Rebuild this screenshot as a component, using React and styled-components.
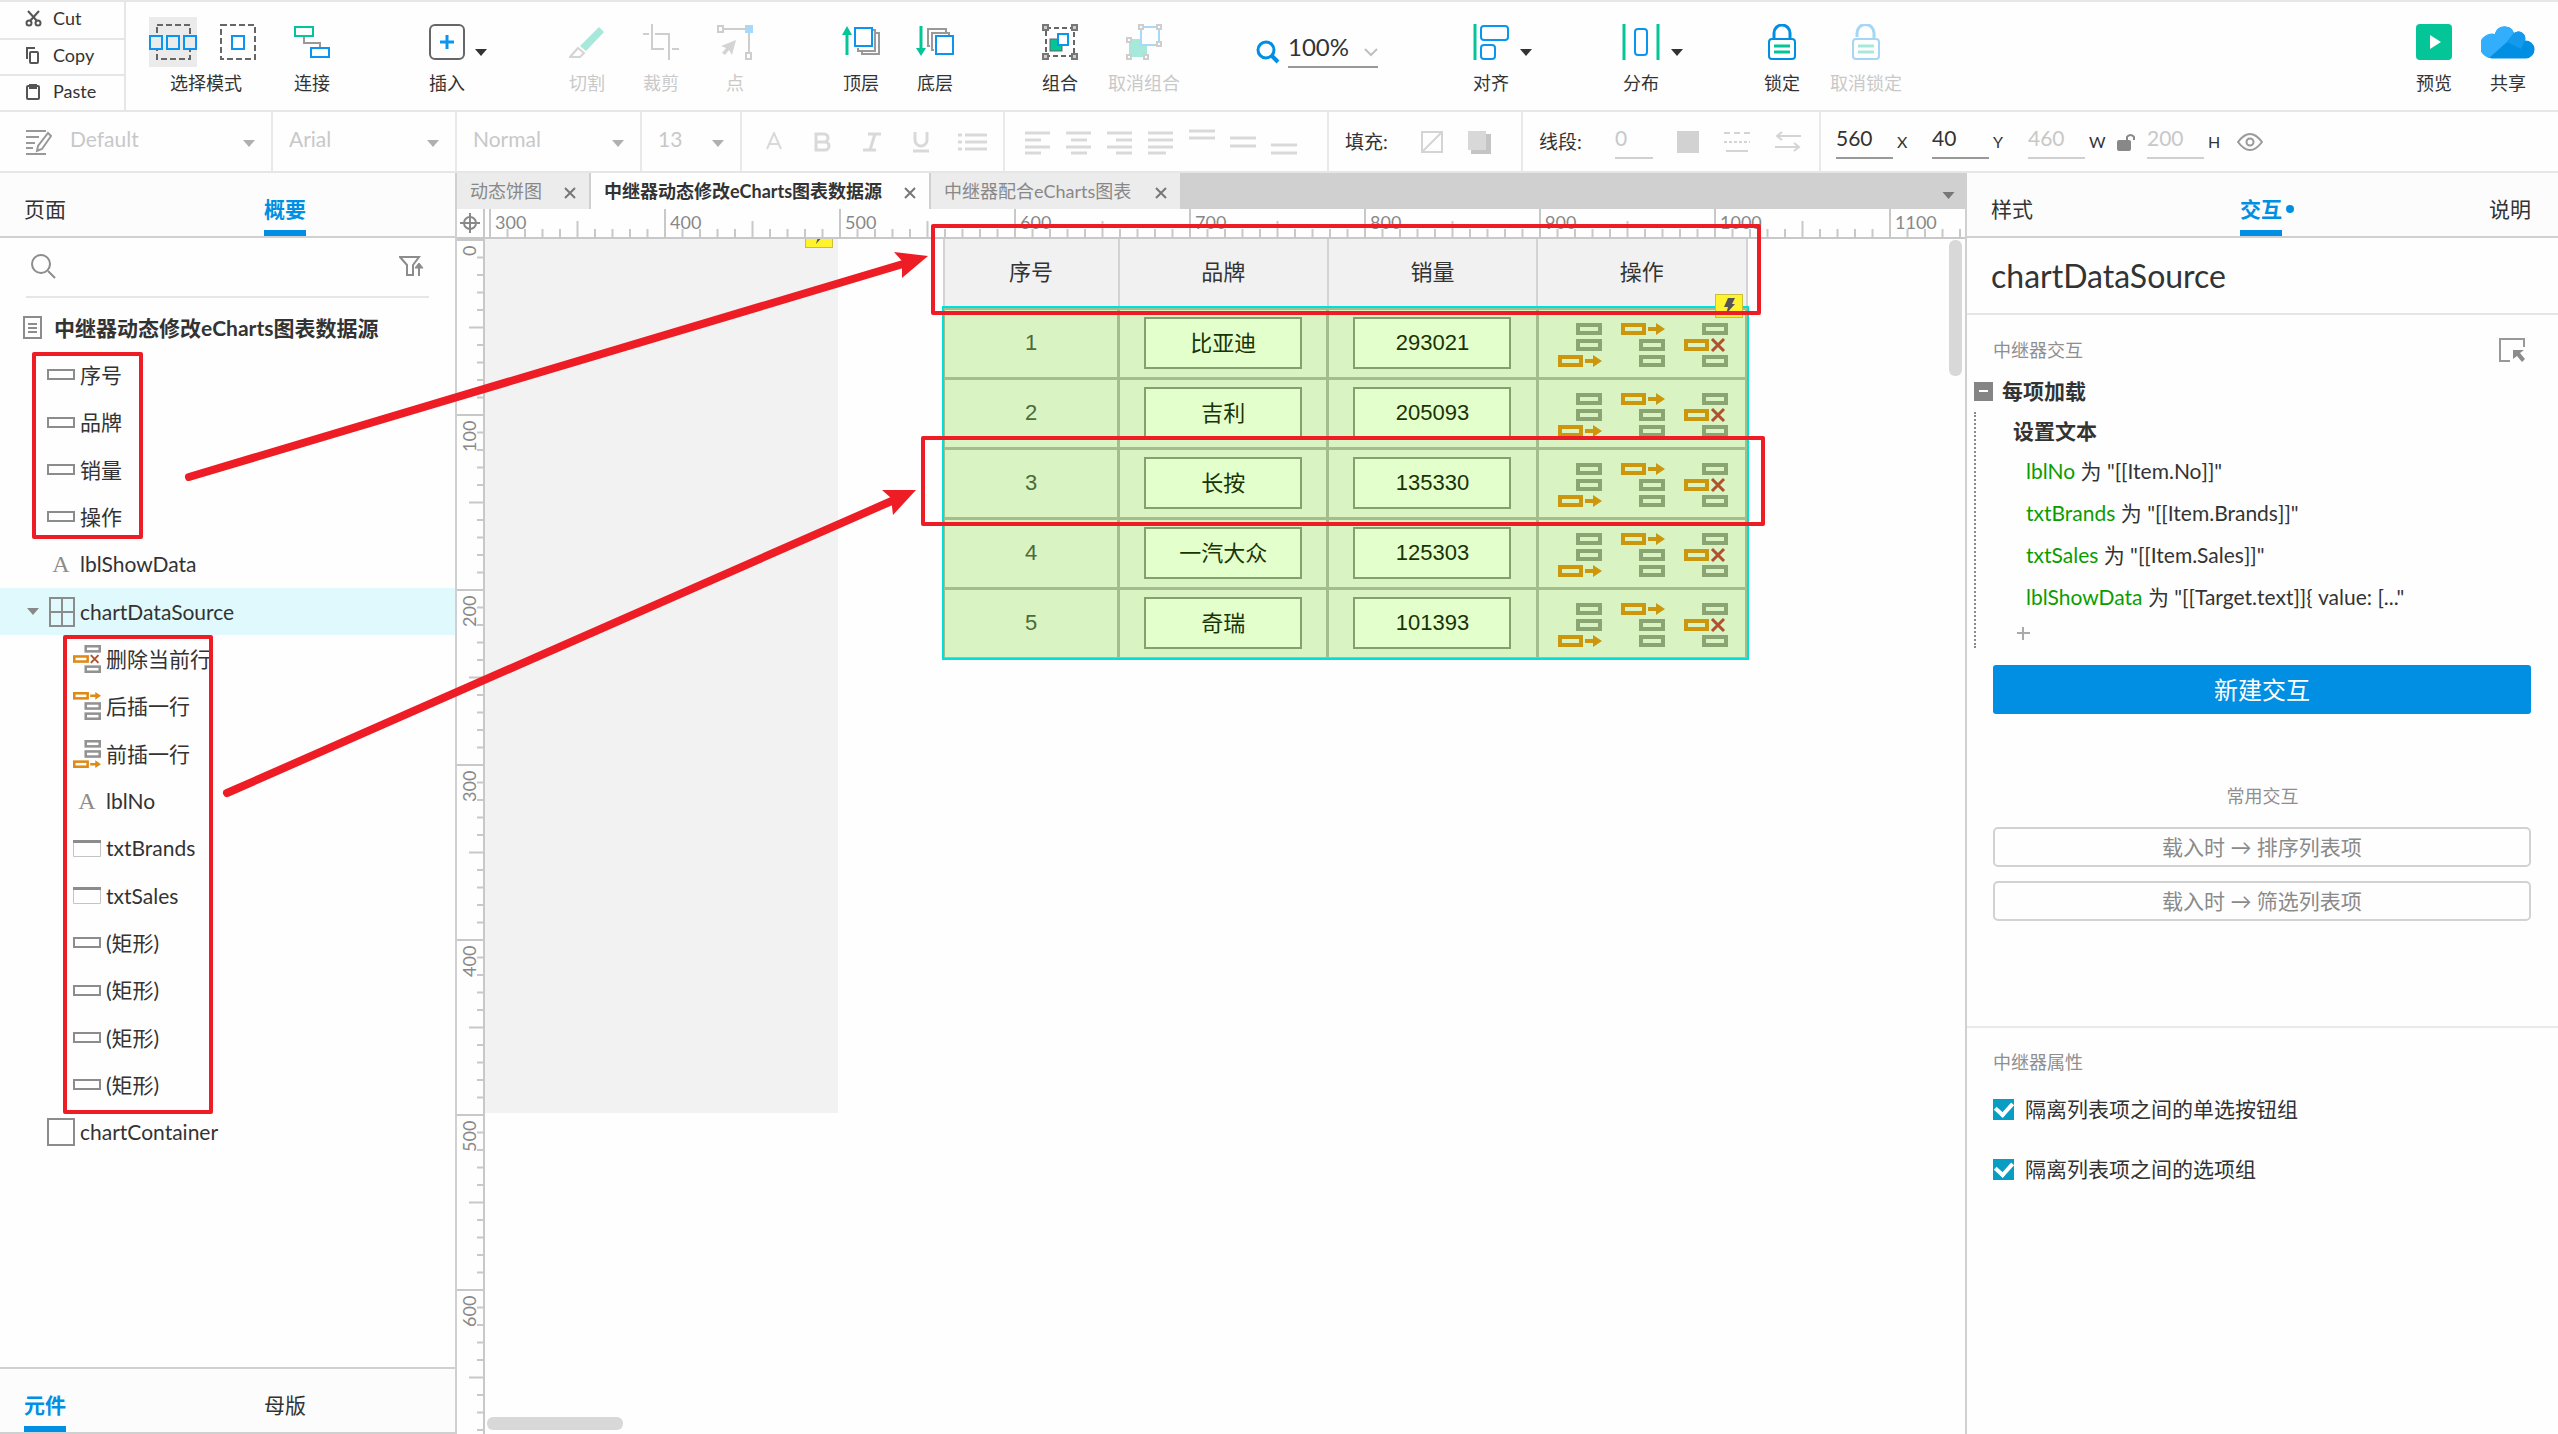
import React from 'react'
import styled, { createGlobalStyle, css } from 'styled-components'

const GlobalStyle = createGlobalStyle`
  * {
    box-sizing: border-box;
  }
  body {
    margin: 0;
    background: #fefefe;
    color: #333;
    font-family: Lato, "Noto Sans CJK SC", sans-serif;
    font-size: 21px;
    line-height: 24px;
  }
  button, input, select {
    font: inherit;
    color: inherit;
    margin: 0;
    padding: 0;
    border: 0;
    border-radius: 0;
    background: none;
    appearance: none;
  }
  button {
    cursor: pointer;
  }
  svg {
    display: block;
    flex: none;
  }
`

const BLUE = '#018fe3'
const SKY = '#0a96f0'
const GREEN = '#04c598'
const RED = '#ee1c25'

const Page = styled.div`
  position: relative;
  display: flex;
  flex-direction: column;
  min-height: 100vh;
  overflow: hidden;
`

/* ---------- top toolbar ---------- */

const Toolbar = styled.header`
  display: flex;
  height: 112px;
  border-top: 2px solid #e6e6e6;
  border-bottom: 2px solid #e6e6e6;
`
const Clipboard = styled.div`
  display: grid;
  grid-template-rows: repeat(3, 1fr);
  width: 126px;
  border-right: 2px solid #e6e6e6;
`
const ClipButton = styled.button`
  display: flex;
  align-items: center;
  gap: 11px;
  padding: 0 0 4px 25px;
  font-size: 18px;
  & + & {
    border-top: 2px solid #e6e6e6;
  }
`
const ToolGroup = styled.div`
  display: flex;
  align-items: flex-start;
  padding-top: 15px;
  margin-left: ${p => (p.$end ? 'auto' : `${p.$gap}px`)};
  margin-right: ${p => (p.$end ? 13 : 0)}px;
`
const ToolButton = styled.button`
  display: flex;
  flex-direction: column;
  align-items: center;
  gap: 4px;
  width: ${p => p.$width}px;
  font-size: 18px;
  white-space: nowrap;
  color: #333;
  &:disabled {
    color: #c9c9c9;
  }
  &:disabled svg {
    opacity: 0.35;
  }
`
const IconBox = styled.span`
  display: flex;
  align-items: center;
  height: 50px;
  background: ${p => (p.$active ? '#ebebeb' : 'none')};
`
const ModeIcons = styled.span`
  display: flex;
  gap: 23px;
  align-self: flex-start;
`
const CaretButton = styled.button`
  display: flex;
  align-items: center;
  height: 70px;
`
const ZoomLevel = styled.label`
  display: flex;
  align-items: flex-end;
  gap: 8px;
  padding-top: 11px;
  > svg {
    margin-bottom: 4px;
  }
`
const ZoomSelect = styled.span`
  display: flex;
  align-items: center;
  border-bottom: 2px solid #999;
  select {
    width: 76px;
    height: 38px;
    font-size: 24px;
  }
  svg {
    margin-top: 10px;
  }
`

/* ---------- style bar ---------- */

const StyleBar = styled.div`
  display: flex;
  height: 61px;
  border-bottom: 2px solid #e6e6e6;
`
const Section = styled.div`
  display: flex;
  align-items: center;
  justify-content: ${p => (p.$spread ? 'space-between' : 'flex-start')};
  gap: ${p => p.$gap || 0}px;
  width: ${p => p.$width}px;
  padding: 0 16px 0 ${p => p.$pad || 16}px;
  border-right: 2px solid #e9e9e9;
  color: #c8c8c8;
  select {
    flex: 1;
    min-width: 0;
    height: 44px;
    padding-bottom: 6px;
    opacity: 1;
  }
  select + svg {
    margin-top: 4px;
  }
`
const SectionField = styled.label`
  display: flex;
  align-items: center;
`
const SectionLabel = styled.span`
  width: 76px;
  font-size: 19px;
  color: #333;
`
const MiniButton = styled.button`
  display: flex;
  justify-content: center;
  width: ${p => p.$width || 26}px;
  color: #d9d9d9;
`
const ValueInput = styled.input`
  width: ${p => p.$width || 57}px;
  height: 34px;
  padding-bottom: 6px;
  border-bottom: 2px solid #999;
  &:disabled {
    color: #c8c8c8;
    border-color: #d0d0d0;
  }
`
const Coordinates = styled.div`
  display: grid;
  grid-template-columns: 96px 96px 89px 30px 90px 26px;
  align-items: center;
  padding-left: 15px;
`
const CoordField = styled.label`
  display: flex;
  align-items: center;
  gap: 4px;
  font-size: 16px;
  input {
    font-size: 21px;
  }
`

/* ---------- panels ---------- */

const Workspace = styled.main`
  display: flex;
  flex: 1;
`
const SidePanel = styled.aside`
  display: flex;
  flex-direction: column;
  flex: none;
  width: ${p => p.$width}px;
  border: 0 solid #d0d0d0;
  border-${p => p.$edge}-width: 2px;
`
const PanelTabs = styled.nav`
  display: flex;
  justify-content: ${p => (p.$spread ? 'space-between' : 'flex-start')};
  gap: 198px;
  height: 65px;
  padding: 0 ${p => (p.$spread ? '27px 0 24px' : '24px')};
  background: #fcfcfc;
  border-bottom: 2px solid #d0d0d0;
  ${p => p.$bottom && css`
    height: 67px;
    margin-top: auto;
    border-top: 2px solid #d0d0d0;
  `}
`
const PanelTab = styled.button`
  position: relative;
  padding-top: 14px;
  border-bottom: 6px solid transparent;
  ${p => p.$active && css`
    color: ${BLUE};
    font-weight: bold;
    border-color: ${BLUE};
  `}
  ${p => p.$dot && css`
    &::after {
      content: "";
      position: absolute;
      right: -12px;
      top: 32px;
      width: 8px;
      height: 8px;
      border-radius: 50%;
      background: ${BLUE};
    }
  `}
`
const SearchBar = styled.label`
  display: flex;
  align-items: center;
  gap: 12px;
  height: 60px;
  margin: 0 26px 6px;
  padding: 0 5px 2px;
  border-bottom: 2px solid #e6e6e6;
  input {
    flex: 1;
    min-width: 0;
  }
`
const Tree = styled.ul`
  display: grid;
  grid-auto-rows: 1fr;
  height: 852px;
  margin: 0;
  padding: 0;
  list-style: none;
`
const TreeRow = styled.li`
  display: flex;
  align-items: center;
  gap: ${p => (p.$level ? 5 : 12)}px;
  white-space: nowrap;
  background: ${p => (p.$selected ? '#e0f9fc' : 'none')};
  font-weight: ${p => (p.$level ? 'normal' : 'bold')};
`
const Twisty = styled.span`
  display: flex;
  justify-content: center;
  width: ${p => [23, 47, 73][p.$level]}px;
  margin-right: -${p => (p.$level ? 5 : 12)}px;
  padding-left: 18px;
`
const LetterIcon = styled.span`
  width: 28px;
  text-align: center;
  font-family: "Liberation Serif", serif;
  font-size: 24px;
  color: #8c8c8c;
`

/* ---------- canvas ---------- */

const Editor = styled.section`
  display: flex;
  flex-direction: column;
  flex: 1;
  min-width: 0;
`
const DocTabs = styled.div`
  display: flex;
  height: 36px;
  background: #d0d0d0;
  font-size: 18px;
`
const DocTab = styled.div`
  display: flex;
  align-items: center;
  justify-content: space-between;
  width: ${p => p.$width}px;
  padding: 0 13px;
  border-right: 2px solid #d0d0d0;
  color: ${p => (p.$active ? '#333' : '#888')};
  background: ${p => (p.$active ? '#fefefe' : '#ececec')};
  font-weight: ${p => (p.$active ? 'bold' : 'normal')};
  white-space: nowrap;
  svg {
    margin-top: 4px;
  }
`
const TabMenu = styled.button`
  margin-left: auto;
  padding: 8px 9px 0;
`
const CanvasGrid = styled.div`
  display: grid;
  grid-template-columns: 28px 1fr;
  grid-template-rows: 30px 1fr;
  flex: 1;
`
const RulerCorner = styled.div`
  display: grid;
  place-items: center;
  border-right: 2px solid #c8c8c8;
  border-bottom: 2px solid #c8c8c8;
`
const RulerTop = styled.div`
  display: flex;
  overflow: hidden;
  padding-left: 4px;
  border-bottom: 2px solid #c8c8c8;
`
const RulerLeft = styled.div`
  overflow: hidden;
  height: 0;
  min-height: 100%;
  border-right: 2px solid #c8c8c8;
`
const RulerMark = styled.div`
  position: relative;
  flex: none;
  width: ${p => (p.$vertical ? 26 : 175)}px;
  height: ${p => (p.$vertical ? 175 : 28)}px;
  color: #888;
  font-size: 18px;
  svg {
    position: absolute;
    inset: 0;
  }
  span {
    display: block;
    padding: 1px 0 0 6px;
    ${p => p.$vertical && css`
      writing-mode: vertical-rl;
      transform: rotate(180deg);
      height: 175px;
      padding: 0 0 7px 2px;
      text-align: end;
    `}
  }
`
const Canvas = styled.div`
  position: relative;
  overflow: hidden;
`
const ChartArea = styled.div`
  position: absolute;
  left: 0;
  top: 0;
  width: 353px;
  height: 874px;
  background: #f2f2f2;
`
const Bolt = styled.span`
  position: absolute;
  left: ${p => p.$x}px;
  top: ${p => p.$y}px;
  display: grid;
  place-items: center;
  width: 28px;
  height: 24px;
  background: #fff32d;
  border: 1px solid #c9bf3a;
`
const Scrollbar = styled.div`
  position: absolute;
  border-radius: 6px;
  background: #d8d8d8;
  ${p => (p.$vertical
    ? 'right: 3px; top: 1px; width: 13px; height: 136px;'
    : 'left: 2px; bottom: 4px; width: 136px; height: 13px;')}
`
const Repeater = styled.table`
  position: absolute;
  left: 457px;
  top: -2px;
  width: 806px;
  table-layout: fixed;
  border-collapse: collapse;
  font-family: "Liberation Sans", "Noto Sans CJK SC", sans-serif;
  font-size: 22px;
  text-align: center;
  col:first-child {
    width: 175px;
  }
  th {
    height: 70px;
    padding: 0;
    font-weight: normal;
    background: #f1f1f1;
    border: 2px solid #d3d3d3;
  }
  tbody {
    outline: 2px solid #00dfdc;
  }
  td {
    height: 70px;
    padding: 0;
    color: #4c6b38;
    background: #d9f3c2;
    border: 3px solid #a3bd8c;
  }
`
const CellInput = styled.input`
  display: block;
  width: 158px;
  height: 52px;
  margin: 0 auto;
  padding-bottom: ${p => (p.$cjk ? 4 : 0)}px;
  text-align: center;
  color: #1a3305;
  background: #e3ffcc;
  border: 2px solid #84a06d;
`
const RowActions = styled.div`
  display: flex;
  justify-content: center;
  gap: 19px;
  padding: 3px 0 0 3px;
`

/* ---------- interactions ---------- */

const WidgetName = styled.h2`
  height: 77px;
  margin: 0;
  padding: 0 24px;
  border-bottom: 2px solid #e6e6e6;
  font-size: 32px;
  font-weight: normal;
  line-height: 75px;
`
const GroupTitle = styled.div`
  display: flex;
  align-items: center;
  justify-content: ${p => (p.$center ? 'center' : 'space-between')};
  margin: ${p => p.$top}px ${p => (p.$center ? 26 : 33)}px 5px 26px;
  color: #8f8f8f;
  font-size: 18px;
`
const EventHead = styled.div`
  display: flex;
  align-items: center;
  gap: 9px;
  height: 42px;
  margin-top: 3px;
  padding-left: 7px;
  font-weight: bold;
`
const Collapse = styled.button`
  display: grid;
  place-items: center;
  width: 19px;
  height: 19px;
  background: #858585;
`
const EventBody = styled.div`
  display: flex;
  flex-direction: column;
  margin-left: 7px;
  padding-left: 37px;
  border-left: 2px dotted #8a8a8a;
`
const ActionName = styled.strong`
  line-height: 38px;
`
const ActionLine = styled.div`
  padding-left: 13px;
  line-height: 42px;
  white-space: nowrap;
  b {
    font-weight: normal;
    color: #0a9d00;
  }
`
const AddTarget = styled.button`
  height: 30px;
  padding-left: 4px;
`
const PrimaryButton = styled.button`
  height: 49px;
  margin: 17px 27px 0 26px;
  border-radius: 3px;
  color: #fff;
  background: ${BLUE};
  font-size: 24px;
`
const OutlineButton = styled.button`
  height: 40px;
  margin: 14px 27px 0 26px;
  border: 2px solid #d2d2d2;
  border-radius: 5px;
  color: #8a8a8a;
`
const Divider = styled.hr`
  width: 100%;
  margin: 105px 0 0;
  border: 0;
  border-top: 2px solid #e9e9e9;
`
const CheckRow = styled.label`
  display: flex;
  align-items: center;
  gap: 11px;
  height: 60px;
  padding-left: 26px;
  input {
    display: grid;
    place-items: center;
    width: 21px;
    height: 21px;
    background: #0a9dc4;
  }
  input:checked::after {
    content: "";
    width: 8px;
    height: 13px;
    margin-bottom: 4px;
    border: solid #fff;
    border-width: 0 4px 4px 0;
    transform: rotate(42deg);
  }
`
const Annotations = styled.svg`
  position: absolute;
  left: 0;
  top: 0;
  pointer-events: none;
`

/* ---------- icons ---------- */

const Svg = ({ w, h, vb, children, ...rest }) => (
  <svg width={w} height={h} viewBox={vb || `0 0 ${w} ${h}`} fill="none" aria-hidden="true" {...rest}>
    {children}
  </svg>
)

const Caret = ({ color = '#333', w = 12 }) => (
  <Svg w={w} h={7} vb="0 0 12 7"><path d="M0 0h12L6 7z" fill={color} /></Svg>
)

const SelectIntersectIcon = () => (
  <Svg w={48} h={36}>
    <rect x="8" y="1" width="33" height="34" stroke="#666" strokeWidth="2" strokeDasharray="6 3" />
    <g stroke={SKY} strokeWidth="2" fill="#ebebeb">
      <rect x="1" y="12" width="12" height="13" />
      <rect x="18" y="12" width="12" height="13" />
      <rect x="35" y="12" width="12" height="13" />
    </g>
  </Svg>
)
const SelectContainIcon = () => (
  <Svg w={36} h={36}>
    <rect x="1" y="1" width="34" height="34" stroke="#666" strokeWidth="2" strokeDasharray="6 3" />
    <rect x="12" y="12" width="12" height="13" stroke={SKY} strokeWidth="2" />
  </Svg>
)
const ConnectIcon = () => (
  <Svg w={36} h={36}>
    <path d="M10 12v7h16v5" stroke="#999" strokeWidth="2" />
    <rect x="1" y="3" width="18" height="9" stroke={GREEN} strokeWidth="2" />
    <rect x="17" y="24" width="18" height="9" stroke={SKY} strokeWidth="2" />
  </Svg>
)
const InsertIcon = () => (
  <Svg w={36} h={36}>
    <rect x="1" y="1" width="34" height="34" rx="5" stroke="#666" strokeWidth="2" />
    <path d="M18 11v14M11 18h14" stroke={SKY} strokeWidth="3" />
  </Svg>
)
const KnifeIcon = () => (
  <Svg w={36} h={36}>
    <path d="M30 3l5 5L17 27l-6-5z" fill={GREEN} />
    <path d="M9 24l6 5-4 4H1z" stroke="#888" strokeWidth="2" />
  </Svg>
)
const CropIcon = () => (
  <Svg w={36} h={36}>
    <path d="M0 10h6M9 0v25h12M12 10h14v26M29 25h7" stroke="#777" strokeWidth="2" />
  </Svg>
)
const PointIcon = () => (
  <Svg w={36} h={36}>
    <path d="M6 5h22M32 9v19" stroke="#777" strokeWidth="2" />
    <rect x="1" y="2" width="5" height="6" stroke="#777" strokeWidth="2" />
    <rect x="29" y="29" width="5" height="6" stroke="#777" strokeWidth="2" />
    <rect x="28" y="1" width="8" height="8" fill={SKY} />
    <path d="M19 16L4 22l5 2-4 5 3 2 4-5 3 5z" fill="#888" />
  </Svg>
)
const FrontIcon = () => (
  <Svg w={38} h={36}>
    <path d="M5 31V8" stroke={GREEN} strokeWidth="3" />
    <path d="M5 2l5 9H0z" fill={GREEN} />
    <path d="M20 27v3h17V9h-3M16 24v3h17V6h-3" stroke="#999" strokeWidth="2" />
    <rect x="13" y="4" width="17" height="18" fill="#fff" stroke={SKY} strokeWidth="2" />
  </Svg>
)
const BackIcon = () => (
  <Svg w={38} h={36}>
    <path d="M5 2v23" stroke={GREEN} strokeWidth="3" />
    <path d="M5 32l5-8H0z" fill={GREEN} />
    <path d="M14 22h-2V5h18v3M18 26h-2V9h17v3" stroke="#999" strokeWidth="2" />
    <rect x="20" y="12" width="17" height="18" fill="#fff" stroke={SKY} strokeWidth="2" />
  </Svg>
)
const GroupIcon = () => (
  <Svg w={36} h={36}>
    <rect x="4" y="4" width="28" height="28" stroke="#666" strokeWidth="2" strokeDasharray="5 3" />
    <g fill="#ccc" stroke="#777" strokeWidth="2">
      <rect x="1" y="1" width="5" height="5" /><rect x="30" y="1" width="5" height="5" />
      <rect x="1" y="30" width="5" height="5" /><rect x="30" y="30" width="5" height="5" />
    </g>
    <rect x="8" y="15" width="12" height="12" fill={GREEN} stroke="#666" />
    <rect x="16" y="10" width="10" height="11" fill="#fff" stroke={SKY} strokeWidth="2" />
  </Svg>
)
const UngroupIcon = () => (
  <Svg w={36} h={36}>
    <rect x="3" y="15" width="18" height="18" fill={GREEN} />
    <rect x="15" y="3" width="18" height="18" fill="#fff" stroke={SKY} strokeWidth="2" />
    <g fill="#fff" stroke="#777" strokeWidth="2">
      <rect x="13" y="1" width="4" height="4" /><rect x="31" y="1" width="4" height="4" />
      <rect x="31" y="18" width="4" height="4" /><rect x="1" y="14" width="4" height="4" />
      <rect x="1" y="31" width="4" height="4" /><rect x="18" y="31" width="4" height="4" />
    </g>
  </Svg>
)
const AlignIcon = () => (
  <Svg w={36} h={36}>
    <path d="M2 0v36" stroke={GREEN} strokeWidth="3" />
    <rect x="8" y="2" width="27" height="14" rx="3" stroke={SKY} strokeWidth="2" />
    <rect x="8" y="21" width="14" height="14" rx="3" stroke={SKY} strokeWidth="2" />
  </Svg>
)
const DistributeIcon = () => (
  <Svg w={38} h={36}>
    <path d="M2 0v36M36 0v36" stroke={GREEN} strokeWidth="3" />
    <rect x="13" y="5" width="12" height="26" rx="3" stroke={SKY} strokeWidth="2" />
  </Svg>
)
const LockIcon = ({ open }) => (
  <Svg w={28} h={36}>
    <path d={open ? 'M5 13V9a8 8 0 0 1 17 0v6' : 'M6 15V9a8 8 0 0 1 16 0v6'} stroke={BLUE} strokeWidth="3" />
    <rect x="1" y="15" width="26" height="20" rx="3" fill="#fff" stroke={BLUE} strokeWidth="2" />
    <path d="M6 22h16M6 28h16" stroke={GREEN} strokeWidth="3" />
  </Svg>
)
const PreviewIcon = () => (
  <Svg w={36} h={36}>
    <rect width="36" height="36" rx="4" fill={GREEN} />
    <path d="M14 11v14l11-7z" fill="#fff" />
  </Svg>
)
const CloudIcon = () => (
  <Svg w={54} h={36}>
    <path d="M11 34.500a12 12 0 0 1 3-24.500a10 10 0 0 1 19-1a7 7 0 0 1 11 7.500a9 9 0 0 1 1 18z" fill={BLUE} />
    <path d="M8 34a12 12 0 0 1 6-24a10 10 0 0 1 19-1l-7 9z" fill="#33aefc" />
    <path d="M33 9a7 7 0 0 1 11 7.500L40 25l-14-7z" fill="#1499ec" />
  </Svg>
)
const ScissorsIcon = () => (
  <Svg w={17} h={17} stroke="#555" strokeWidth="2">
    <circle cx="4" cy="13" r="2.500" /><circle cx="13" cy="13" r="2.500" />
    <path d="M3 1l9 10M14 1L5 11" />
  </Svg>
)
const CopyIcon = () => (
  <Svg w={17} h={17} stroke="#555" strokeWidth="2">
    <path d="M2 12V1h8" /><rect x="5" y="5" width="8" height="11" rx="1" />
  </Svg>
)
const PasteIcon = () => (
  <Svg w={17} h={17} stroke="#555" strokeWidth="2">
    <rect x="2" y="3" width="12" height="13" rx="1" />
    <path d="M5 2h6v3H5z" fill="#555" />
  </Svg>
)
const EditStyleIcon = () => (
  <Svg w={26} h={26} stroke="#999" strokeWidth="2">
    <path d="M0 2h20M0 8h13M0 14h9M0 19h7M0 25h20M22 4l3 3-9 13-5 2 1-5z" />
  </Svg>
)
const ListIcon = () => (
  <Svg w={30} h={20} stroke="currentColor" strokeWidth="3">
    <path d="M1 3h4M8 3h22M1 10h4M8 10h22M1 17h4M8 17h22" />
  </Svg>
)
const LinesIcon = ({ d }) => (
  <Svg w={26} h={26} stroke="currentColor" strokeWidth="3"><path d={d} /></Svg>
)
const NoFillIcon = () => (
  <Svg w={22} h={22} stroke="#d4d4d4" strokeWidth="2"><rect x="1" y="1" width="20" height="20" /><path d="M2 20L20 2" /></Svg>
)
const ShadowIcon = () => (
  <Svg w={24} h={24}><path d="M4 4h20v20H4z" fill="#c4c4c4" /><path d="M1 1h18v19H1z" fill="#d8d8d8" /></Svg>
)
const SwatchIcon = () => <Svg w={22} h={22}><path d="M0 0h22v22H0z" fill="#d2d2d2" /></Svg>
const DashIcon = () => (
  <Svg w={28} h={22} stroke="#d4d4d4" strokeWidth="2">
    <path d="M1 2h26" strokeDasharray="6 4" /><path d="M1 11h26" strokeDasharray="3 2" /><path d="M3 20h22" />
  </Svg>
)
const SwapIcon = () => (
  <Svg w={26} h={22} stroke="#d4d4d4" strokeWidth="2"><path d="M26 5H2M7 1L2 5l5 4M0 16h24M19 12l5 4-5 4" /></Svg>
)
const PadlockIcon = () => (
  <Svg w={18} h={20}><path d="M10 9V5a4 4 0 0 1 7 0v3" stroke="#888" strokeWidth="2" /><rect y="8" width="14" height="11" rx="2" fill="#888" /></Svg>
)
const EyeIcon = () => (
  <Svg w={26} h={18} stroke="#999" strokeWidth="2"><path d="M1 9Q7 1 13 1t12 8q-6 8-12 8T1 9z" /><circle cx="13" cy="9" r="3.500" /></Svg>
)
const SearchIcon = () => (
  <Svg w={25} h={25} stroke="#8c8c8c" strokeWidth="2"><circle cx="10" cy="10" r="9" /><path d="M17 17l7 7" /></Svg>
)
const ZoomIcon = () => (
  <Svg w={24} h={24} stroke={BLUE} strokeWidth="3"><circle cx="10" cy="10" r="8" /><path d="M16 16l6 6" strokeWidth="4" /></Svg>
)
const FilterIcon = () => (
  <Svg w={25} h={21} stroke="#8c8c8c" strokeWidth="2">
    <path d="M1 1h19l-6 8v10H8V9z" /><path d="M20 20v-9" /><path d="M20 7l4 5h-8z" fill="#8c8c8c" strokeWidth="1" />
  </Svg>
)
const CloseIcon = () => (
  <Svg w={12} h={12} stroke="#777" strokeWidth="2"><path d="M1 1l10 10M11 1L1 11" /></Svg>
)
const PageIcon = () => (
  <Svg w={19} h={23} stroke="#8c8c8c" strokeWidth="2"><path d="M1 1h17v21H1zM5 8h9M5 12h9M5 16h9" /></Svg>
)
const RectIcon = () => (
  <Svg w={28} h={11} stroke="#8c8c8c" strokeWidth="2"><path d="M1 1h26v9H1z" /></Svg>
)
const FieldIcon = () => (
  <Svg w={28} h={17} stroke="#c4c4c4" strokeWidth="1"><path d="M.5 1h27v15.500H.5z" /><path d="M0 1.500h28" stroke="#8c8c8c" strokeWidth="3" /></Svg>
)
const GridIcon = () => (
  <Svg w={28} h={30} stroke="#8c8c8c" strokeWidth="2"><path d="M3 1h24v28H3zM15 1v28M3 15h24" /></Svg>
)
const BoxIcon = () => (
  <Svg w={28} h={28} stroke="#8c8c8c" strokeWidth="2"><path d="M1 1h26v26H1z" /></Svg>
)
const TargetIcon = () => (
  <Svg w={20} h={20} stroke="#888" strokeWidth="2"><circle cx="10" cy="10" r="6" /><path d="M10 0v20M0 10h20" /></Svg>
)
const PickIcon = () => (
  <Svg w={26} h={24} stroke="#999" strokeWidth="2">
    <path d="M25 9V1H1v22h10" /><path d="M14 12h11l-4 3 5 6-3 3-5-6-4 3z" fill="#8c8c8c" stroke="none" />
  </Svg>
)

// the three row operations share one drawing: the orange slot moves
const RowOpIcon = ({ op, size = 44, gray = '#8ba572', accent = '#cc970c' }) => {
  const slot = { after: 0, remove: 1, before: 2 }[op]
  const y = slot * 16
  return (
    <Svg w={size} h={size} vb="0 0 44 44">
      {[0, 1, 2].filter(i => i !== slot).map(i => (
        <rect key={i} x="20" y={i * 16 + 2} width="22" height="8" stroke={gray} strokeWidth="4" />
      ))}
      <rect x="2" y={y + 2} width="21" height="8" stroke={accent} strokeWidth="4" />
      {op === 'remove'
        ? <path d={`M28 ${y}l12 12M40 ${y}l-12 12`} stroke="#b0502c" strokeWidth="3" />
        : <path d={`M27 ${y + 4}h8v-4l9 6-9 6v-4h-8z`} fill={accent} />}
    </Svg>
  )
}

const BoltIcon = () => (
  <Svg w={12} h={16}><path d="M5 0h7L9 6h3L3 16l2-7H1z" fill="#555" /></Svg>
)

/* ---------- data ---------- */

const treeItems = [
  { level: 0, icon: <PageIcon />, name: '中继器动态修改eCharts图表数据源' },
  { level: 1, icon: <RectIcon />, name: '序号' },
  { level: 1, icon: <RectIcon />, name: '品牌' },
  { level: 1, icon: <RectIcon />, name: '销量' },
  { level: 1, icon: <RectIcon />, name: '操作' },
  { level: 1, icon: <LetterIcon>A</LetterIcon>, name: 'lblShowData' },
  { level: 1, icon: <GridIcon />, name: 'chartDataSource', open: true },
  { level: 2, icon: <RowOpIcon op="remove" size={28} gray="#929292" accent="#de8a14" />, name: '删除当前行' },
  { level: 2, icon: <RowOpIcon op="after" size={28} gray="#929292" accent="#de8a14" />, name: '后插一行' },
  { level: 2, icon: <RowOpIcon op="before" size={28} gray="#929292" accent="#de8a14" />, name: '前插一行' },
  { level: 2, icon: <LetterIcon>A</LetterIcon>, name: 'lblNo' },
  { level: 2, icon: <FieldIcon />, name: 'txtBrands' },
  { level: 2, icon: <FieldIcon />, name: 'txtSales' },
  { level: 2, icon: <RectIcon />, name: '(矩形)' },
  { level: 2, icon: <RectIcon />, name: '(矩形)' },
  { level: 2, icon: <RectIcon />, name: '(矩形)' },
  { level: 2, icon: <RectIcon />, name: '(矩形)' },
  { level: 1, icon: <BoxIcon />, name: 'chartContainer' },
]

const brands = [
  ['比亚迪', '293021'],
  ['吉利', '205093'],
  ['长按', '135330'],
  ['一汽大众', '125303'],
  ['奇瑞', '101393'],
]

const actions = [
  ['lblNo', '"[[Item.No]]"'],
  ['txtBrands', '"[[Item.Brands]]"'],
  ['txtSales', '"[[Item.Sales]]"'],
  ['lblShowData', '"[[Target.text]]{ value: [..."'],
]

const textAligns = [
  ['左对齐', 'M0 4h25M0 11h16M0 18h25M0 24h16'],
  ['居中', 'M0 4h25M5 11h16M0 18h25M5 24h16'],
  ['右对齐', 'M0 4h25M9 11h16M0 18h25M9 24h16'],
  ['两端对齐', 'M0 4h25M0 11h25M0 18h25M0 24h18'],
  ['顶部', 'M0 2h26M0 9h26'],
  ['中部', 'M0 9h26M0 17h26'],
  ['底部', 'M0 16h26M0 24h26'],
]

/* ---------- parts ---------- */

const Tool = ({ icon, label, width = 74, disabled }) => (
  <ToolButton $width={width} disabled={disabled}>
    <IconBox>{icon}</IconBox>
    {label}
  </ToolButton>
)

const Picker = ({ value, label }) => (
  <>
    <select aria-label={label} disabled defaultValue={value}>
      <option>{value}</option>
    </select>
    <Caret color="#b0b0b0" />
  </>
)

const Coord = ({ value, letter, disabled }) => (
  <CoordField>
    <ValueInput defaultValue={value} disabled={disabled} />
    {letter}
  </CoordField>
)

const Ruler = ({ from, count, vertical }) => {
  const ticks = [...Array(10).keys()].map(i => {
    const at = i * 17.5 + 1
    const start = i === 0 ? 0 : i === 5 ? 12 : 20
    return vertical ? `M${start} ${at}H28` : `M${at} ${start}V28`
  }).join('')
  return [...Array(count).keys()].map(i => (
    <RulerMark key={i} $vertical={vertical}>
      <Svg w={vertical ? 26 : 175} h={vertical ? 175 : 28} stroke="#c8c8c8" strokeWidth="2"><path d={ticks} /></Svg>
      <span>{from + i * 100}</span>
    </RulerMark>
  ))
}

const TopBar = () => (
  <Toolbar>
    <Clipboard>
      <ClipButton><ScissorsIcon />Cut</ClipButton>
      <ClipButton><CopyIcon />Copy</ClipButton>
      <ClipButton><PasteIcon />Paste</ClipButton>
    </Clipboard>
    <ToolGroup $gap={23}>
      <ToolButton $width={114}>
        <ModeIcons>
          <IconBox $active><SelectIntersectIcon /></IconBox>
          <IconBox><SelectContainIcon /></IconBox>
        </ModeIcons>
        选择模式
      </ToolButton>
    </ToolGroup>
    <ToolGroup $gap={12}><Tool icon={<ConnectIcon />} label="连接" /></ToolGroup>
    <ToolGroup $gap={70}>
      <Tool icon={<InsertIcon />} label="插入" width={56} />
      <CaretButton aria-label="插入选项"><Caret /></CaretButton>
    </ToolGroup>
    <ToolGroup $gap={63}>
      <Tool icon={<KnifeIcon />} label="切割" disabled />
      <Tool icon={<CropIcon />} label="裁剪" disabled />
      <Tool icon={<PointIcon />} label="点" disabled />
    </ToolGroup>
    <ToolGroup $gap={52}>
      <Tool icon={<FrontIcon />} label="顶层" />
      <Tool icon={<BackIcon />} label="底层" />
    </ToolGroup>
    <ToolGroup $gap={46}>
      <Tool icon={<GroupIcon />} label="组合" width={84} />
      <Tool icon={<UngroupIcon />} label="取消组合" width={84} disabled />
    </ToolGroup>
    <ToolGroup $gap={70}>
      <ZoomLevel>
        <ZoomIcon />
        <ZoomSelect>
          <select aria-label="缩放" defaultValue="100%"><option>100%</option></select>
          <Svg w={14} h={9} stroke="#c0c0c0" strokeWidth="2"><path d="M1 1l6 6 6-6" /></Svg>
        </ZoomSelect>
      </ZoomLevel>
    </ToolGroup>
    <ToolGroup $gap={84}>
      <Tool icon={<AlignIcon />} label="对齐" width={58} />
      <CaretButton aria-label="对齐选项"><Caret /></CaretButton>
    </ToolGroup>
    <ToolGroup $gap={79}>
      <Tool icon={<DistributeIcon />} label="分布" width={60} />
      <CaretButton aria-label="分布选项"><Caret /></CaretButton>
    </ToolGroup>
    <ToolGroup $gap={57}>
      <Tool icon={<LockIcon />} label="锁定" width={84} />
      <Tool icon={<LockIcon open />} label="取消锁定" width={84} disabled />
    </ToolGroup>
    <ToolGroup $end>
      <Tool icon={<PreviewIcon />} label="预览" />
      <Tool icon={<CloudIcon />} label="共享" />
    </ToolGroup>
  </Toolbar>
)

const FormatBar = () => (
  <StyleBar>
    <Section $width={273} $pad={26} $gap={18}><EditStyleIcon /><Picker label="样式" value="Default" /></Section>
    <Section $width={184}><Picker label="字体" value="Arial" /></Section>
    <Section $width={185}><Picker label="字重" value="Normal" /></Section>
    <Section $width={100}><Picker label="字号" value="13" /></Section>
    <Section $width={263} $pad={19} $spread>
      <MiniButton aria-label="颜色">
        <Svg w={18} h={20} stroke="currentColor" strokeWidth="2"><path d="M2 17L9 1l7 16M5 12h8" /></Svg>
      </MiniButton>
      <MiniButton aria-label="粗体">
        <Svg w={18} h={20} stroke="currentColor" strokeWidth="3"><path d="M2 2h8a4 4 0 0 1 0 8H2zM2 10h9a4 4 0 0 1 0 8H2z" /></Svg>
      </MiniButton>
      <MiniButton aria-label="斜体">
        <Svg w={18} h={20} stroke="currentColor" strokeWidth="3"><path d="M5 2h13M0 18h13M12 2L7 18" /></Svg>
      </MiniButton>
      <MiniButton aria-label="下划线">
        <Svg w={18} h={22} stroke="currentColor" strokeWidth="3"><path d="M3 1v8a6 6 0 0 0 12 0V1M1 20h16" /></Svg>
      </MiniButton>
      <MiniButton aria-label="项目符号" $width={30}><ListIcon /></MiniButton>
    </Section>
    <Section $width={324} $pad={20} $gap={15}>
      {textAligns.map(([label, d]) => (
        <MiniButton key={label} aria-label={label}><LinesIcon d={d} /></MiniButton>
      ))}
    </Section>
    <Section $width={194} $gap={10}>
      <SectionLabel>填充:</SectionLabel>
      <MiniButton aria-label="填充颜色"><NoFillIcon /></MiniButton>
      <MiniButton aria-label="阴影" $width={60}><ShadowIcon /></MiniButton>
    </Section>
    <Section $width={298} $gap={24}>
      <SectionField>
        <SectionLabel>线段:</SectionLabel>
        <ValueInput $width={38} defaultValue="0" disabled />
      </SectionField>
      <MiniButton aria-label="线段颜色" $width={22}><SwatchIcon /></MiniButton>
      <MiniButton aria-label="线段类型" $width={28}><DashIcon /></MiniButton>
      <MiniButton aria-label="箭头样式"><SwapIcon /></MiniButton>
    </Section>
    <Coordinates>
      <Coord value="560" letter="X" />
      <Coord value="40" letter="Y" />
      <Coord value="460" letter="W" disabled />
      <PadlockIcon />
      <Coord value="200" letter="H" disabled />
      <EyeIcon />
    </Coordinates>
  </StyleBar>
)

const Outline = () => (
  <SidePanel $width={457} $edge="right">
    <PanelTabs>
      <PanelTab>页面</PanelTab>
      <PanelTab $active>概要</PanelTab>
    </PanelTabs>
    <SearchBar>
      <SearchIcon />
      <input aria-label="搜索" />
      <FilterIcon />
    </SearchBar>
    <Tree>
      {treeItems.map((item, index) => (
        <TreeRow key={index} $level={item.level} $selected={item.open}>
          <Twisty $level={item.level}>{item.open && <Caret color="#888" />}</Twisty>
          {item.icon}
          <span>{item.name}</span>
        </TreeRow>
      ))}
    </Tree>
    <PanelTabs $bottom>
      <PanelTab $active>元件</PanelTab>
      <PanelTab>母版</PanelTab>
    </PanelTabs>
  </SidePanel>
)

const DataTable = () => (
  <Repeater>
    <colgroup>
      <col /><col /><col /><col />
    </colgroup>
    <thead>
      <tr>
        <th>序号</th>
        <th>品牌</th>
        <th>销量</th>
        <th>操作</th>
      </tr>
    </thead>
    <tbody>
      {brands.map(([brand, sales], index) => (
        <tr key={brand}>
          <td>{index + 1}</td>
          <td><CellInput aria-label="品牌" defaultValue={brand} $cjk /></td>
          <td><CellInput aria-label="销量" defaultValue={sales} /></td>
          <td>
            <RowActions>
              <button aria-label="前插一行"><RowOpIcon op="before" /></button>
              <button aria-label="后插一行"><RowOpIcon op="after" /></button>
              <button aria-label="删除当前行"><RowOpIcon op="remove" /></button>
            </RowActions>
          </td>
        </tr>
      ))}
    </tbody>
  </Repeater>
)

const Design = () => (
  <Editor>
    <DocTabs>
      <DocTab $width={134}>动态饼图<CloseIcon /></DocTab>
      <DocTab $width={340} $active>中继器动态修改eCharts图表数据源<CloseIcon /></DocTab>
      <DocTab $width={251}>中继器配合eCharts图表<CloseIcon /></DocTab>
      <TabMenu aria-label="全部标签"><Caret color="#777" w={15} /></TabMenu>
    </DocTabs>
    <CanvasGrid>
      <RulerCorner><TargetIcon /></RulerCorner>
      <RulerTop><Ruler from={300} count={9} /></RulerTop>
      <RulerLeft><Ruler from={0} count={7} vertical /></RulerLeft>
      <Canvas>
        <ChartArea />
        <Bolt $x={320} $y={-15}><BoltIcon /></Bolt>
        <DataTable />
        <Bolt $x={1230} $y={55}><BoltIcon /></Bolt>
        <Scrollbar $vertical />
        <Scrollbar />
      </Canvas>
    </CanvasGrid>
  </Editor>
)

const Interactions = () => (
  <SidePanel $width={593} $edge="left">
    <PanelTabs $spread>
      <PanelTab>样式</PanelTab>
      <PanelTab $active $dot>交互</PanelTab>
      <PanelTab>说明</PanelTab>
    </PanelTabs>
    <WidgetName>chartDataSource</WidgetName>
    <GroupTitle $top={23}>中继器交互<PickIcon /></GroupTitle>
    <EventHead>
      <Collapse aria-label="折叠"><Svg w={9} h={2}><path d="M0 0h9v2H0z" fill="#fff" /></Svg></Collapse>
      每项加载
    </EventHead>
    <EventBody>
      <ActionName>设置文本</ActionName>
      {actions.map(([target, value]) => (
        <ActionLine key={target}><b>{target}</b> 为 {value}</ActionLine>
      ))}
      <AddTarget aria-label="添加目标">
        <Svg w={13} h={13} stroke="#aaa" strokeWidth="2"><path d="M6 0v13M0 6h13" /></Svg>
      </AddTarget>
    </EventBody>
    <PrimaryButton>新建交互</PrimaryButton>
    <GroupTitle $top={70} $center>常用交互</GroupTitle>
    <OutlineButton>载入时 → 排序列表项</OutlineButton>
    <OutlineButton>载入时 → 筛选列表项</OutlineButton>
    <Divider />
    <GroupTitle $top={22}>中继器属性</GroupTitle>
    <CheckRow><input type="checkbox" defaultChecked />隔离列表项之间的单选按钮组</CheckRow>
    <CheckRow><input type="checkbox" defaultChecked />隔离列表项之间的选项组</CheckRow>
  </SidePanel>
)

const Marks = () => (
  <Annotations width="1800" height="1200" fill="none" stroke={RED} strokeWidth="4" strokeLinejoin="round">
    <rect x="34" y="354" width="107" height="183" />
    <rect x="65" y="637" width="146" height="475" />
    <rect x="933" y="226" width="826" height="87" />
    <rect x="923" y="438" width="840" height="86" />
    <path d="M189 477L903 264M227 793L894 500" strokeWidth="8" strokeLinecap="round" />
    <path d="M928 256l-34-4 8 9v17zM916 490h-34l9 8 2 17z" fill={RED} stroke="none" />
  </Annotations>
)

const App = () => (
  <Page>
    <GlobalStyle />
    <TopBar />
    <FormatBar />
    <Workspace>
      <Outline />
      <Design />
      <Interactions />
    </Workspace>
    <Marks />
  </Page>
)

export default App
